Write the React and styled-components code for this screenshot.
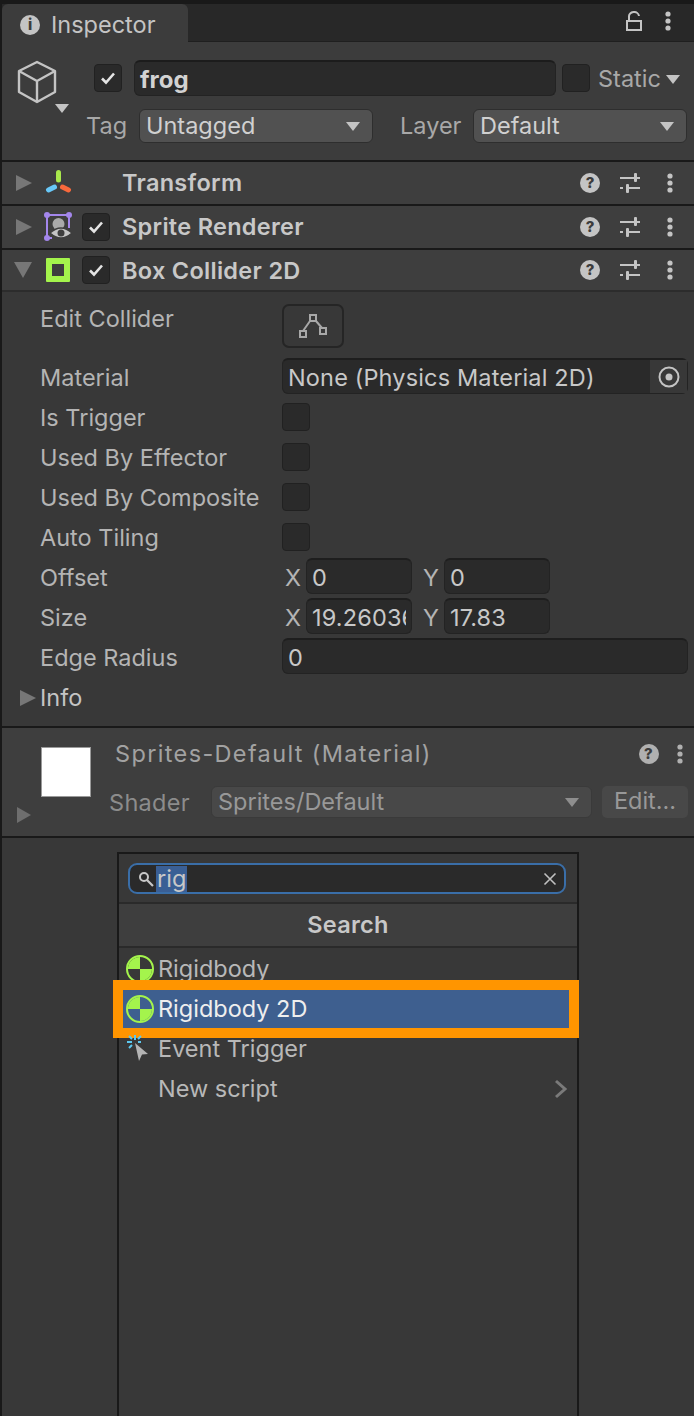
import React from 'react';
import styled, { createGlobalStyle } from 'styled-components';

const GlobalStyle = createGlobalStyle`
    html, body {
        margin: 0;
        padding: 0;
        background-color: #191919;
    }
    * {
        box-sizing: border-box;
    }
`

const Page = styled.div`
    position: relative;
    width: 694px;
    height: 1416px;
    overflow: hidden;
    padding: 4px 0 0 2px;
    background-color: #191919;
    font-family: Inter, "Noto Sans", sans-serif;
    font-size: 23.5px;
    line-height: 30px;
    color: #c4c4c4;
`

const TabBar = styled.div`
    display: flex;
    align-items: stretch;
    justify-content: space-between;
    height: 38px;
    background-color: #282828;
    border-bottom: 1px solid #1f1f1f;
`
const Tab = styled.div`
    display: flex;
    align-items: center;
    gap: 11px;
    width: 186px;
    height: 38px;
    padding: 4px 0 0 18px;
    background-color: #3c3c3c;
    border-radius: 6px 6px 0 0;
`
const TabTools = styled.div`
    display: flex;
    align-items: center;
    gap: 16px;
    padding-right: 16px;
    padding-bottom: 4px;
`
const Badge = styled.span`
    display: inline-flex;
    align-items: center;
    justify-content: center;
    flex: none;
    width: 20px;
    height: 20px;
    border-radius: 50%;
    background-color: ${(p) => (p.$dim ? '#b0b0b0' : '#c4c4c4')};
    color: #3c3c3c;
    font-size: 15px;
    font-weight: 800;
    line-height: 20px;
`

const Header = styled.div`
    display: flex;
    height: 118px;
    padding: 18px 7px 0 15px;
    background-color: #3c3c3c;
`
const CubeColumn = styled.div`
    position: relative;
    flex: none;
    width: 70px;
    height: 60px;
`
const CubeCaret = styled.span`
    position: absolute;
    left: 38px;
    top: 44px;
    width: 0;
    height: 0;
    border-left: 7px solid transparent;
    border-right: 7px solid transparent;
    border-top: 9px solid #c4c4c4;
`
const HeaderFields = styled.div`
    flex: 1;
    display: flex;
    flex-direction: column;
    gap: 13px;
`
const NameRow = styled.div`
    display: flex;
    align-items: center;
    gap: 6px;
    padding-left: 7px;
`
const TagRow = styled.div`
    display: flex;
    align-items: center;
    color: #a8a8a8;
`
const TagLabel = styled.span`
    flex: none;
    width: ${(p) => p.$width}px;
    margin-left: ${(p) => p.$left || 0}px;
`
const Check = styled.span`
    display: inline-flex;
    align-items: center;
    justify-content: center;
    flex: none;
    width: 28px;
    height: 28px;
    background-color: #2a2a2a;
    border: 1px solid #212121;
    border-radius: 4px;
`
const FieldCheck = styled(Check)`
    margin-top: -2px;
`
const NameInput = styled.div`
    flex: none;
    width: 422px;
    height: 36px;
    margin-left: 6px;
    padding-left: 5px;
    background-color: #2a2a2a;
    border: 1px solid #232323;
    border-top: 2px solid #1c1c1c;
    border-radius: 6px;
    font-size: 24px;
    font-weight: 700;
    line-height: 35px;
    color: #d2d2d2;
`
const StaticLabel = styled.span`
    display: flex;
    align-items: center;
    gap: 5px;
    margin-left: 2px;
    padding-top: 2px;
    color: #a8a8a8;
`
const Caret = styled.span`
    flex: none;
    width: 0;
    height: 0;
    border-left: 7px solid transparent;
    border-right: 7px solid transparent;
    border-top: 9px solid ${(p) => (p.$dim ? '#8e8e8e' : '#c4c4c4')};
`
const Select = styled.div`
    display: flex;
    align-items: center;
    justify-content: space-between;
    flex: none;
    width: ${(p) => p.$width}px;
    height: ${(p) => p.$height || 34}px;
    padding: 0 12px 0 6px;
    background-color: ${(p) => (p.$dim ? '#484848' : '#515151')};
    border: 1px solid ${(p) => (p.$dim ? '#3a3a3a' : '#2e2e2e')};
    border-radius: 6px;
    color: ${(p) => (p.$dim ? '#989898' : '#d0d0d0')};
`

const ComponentBar = styled.div`
    display: flex;
    align-items: center;
    height: ${(p) => (p.$open ? 40 : 42)}px;
    margin-top: 2px;
    padding-right: 14px;
    background-color: #3e3e3e;
`
const Fold = styled.span`
    flex: none;
    width: 0;
    height: 0;
    margin-left: 14px;
    border-top: 8px solid transparent;
    border-bottom: 8px solid transparent;
    border-left: 16px solid #777777;
`
const FoldOpen = styled.span`
    flex: none;
    width: 0;
    height: 0;
    margin-left: 12px;
    border-left: 9px solid transparent;
    border-right: 9px solid transparent;
    border-top: 16px solid #777777;
`
const BarIcon = styled.span`
    display: flex;
    align-items: center;
    justify-content: center;
    flex: none;
    width: 28px;
    height: 28px;
    margin-left: 12px;
`
const BarCheck = styled(Check)`
    margin-left: 10px;
`
const BarSlot = styled.span`
    flex: none;
    width: 38px;
`
const BarTitle = styled.span`
    flex: 1;
    margin-left: 12px;
    padding-top: ${(p) => (p.$open ? 1 : 0)}px;
    font-weight: 600;
    letter-spacing: 0.3px;
    color: #c8c8c8;
`
const BarTools = styled.div`
    display: flex;
    align-items: center;
    gap: 20px;
`

const Body = styled.div`
    height: 436px;
    padding: 12px 6px 0 38px;
    background-color: #383838;
    border-top: 2px solid #2c2c2c;
`
const FieldRow = styled.div`
    display: flex;
    align-items: center;
    height: ${(p) => p.$height || 40}px;
    margin-bottom: ${(p) => p.$gap || 0}px;
`
const Label = styled.span`
    flex: none;
    width: 242px;
    color: #b4b4b4;
`
const TopLabel = styled(Label)`
    align-self: flex-start;
`
const EditButton = styled.span`
    display: flex;
    align-items: center;
    justify-content: center;
    width: 62px;
    height: 44px;
    background-color: #383838;
    border: 2px solid #252525;
    border-radius: 7px;
`
const Input = styled.div`
    flex: ${(p) => (p.$grow ? 1 : 'none')};
    width: ${(p) => (p.$grow ? 'auto' : '106px')};
    height: 36px;
    margin-top: -4px;
    padding: 0 5px 0 5px;
    background-color: #2a2a2a;
    border: 1px solid #232323;
    border-top: 2px solid #1e1e1e;
    border-radius: 6px;
    line-height: 36px;
    letter-spacing: 0.15px;
    color: #c8c8c8;
`
const InputText = styled.span`
    display: block;
    overflow: hidden;
    white-space: nowrap;
`
const ObjectField = styled(Input)`
    display: flex;
    justify-content: space-between;
    padding-right: 0;
`
const PickerSlot = styled.span`
    display: flex;
    align-items: center;
    justify-content: center;
    width: 37px;
    background-color: #383838;
`
const Axis = styled.span`
    flex: none;
    width: ${(p) => p.$width}px;
    padding-left: ${(p) => p.$pad}px;
    color: #b4b4b4;
`
const InfoFold = styled(Fold)`
    margin-left: -20px;
    margin-right: 4px;
`

const MaterialPanel = styled.div`
    position: relative;
    display: flex;
    height: 108px;
    margin-top: 2px;
    padding: 11px 6px 0 39px;
    background-color: #3e3e3e;
`
const Swatch = styled.span`
    flex: none;
    width: 50px;
    height: 50px;
    margin-top: 8px;
    background-color: #ffffff;
    border: 1px solid #9a9a9a;
`
const MaterialFold = styled(Fold)`
    position: absolute;
    left: 15px;
    top: 79px;
    margin: 0;
    border-left-width: 14px;
    border-left-color: #6e6e6e;
`
const MaterialColumn = styled.div`
    flex: 1;
    display: flex;
    flex-direction: column;
    gap: 17px;
    margin-left: 18px;
`
const MaterialTitle = styled.div`
    display: flex;
    align-items: center;
    justify-content: space-between;
    height: 30px;
    margin-right: -2px;
    padding-left: 6px;
    letter-spacing: 1.35px;
    color: #a2a2a2;
`
const MaterialTools = styled.div`
    display: flex;
    align-items: center;
    gap: 11px;
`
const ShaderRow = styled.div`
    display: flex;
    align-items: center;
    color: #8c8c8c;
`
const ShaderLabel = styled.span`
    flex: none;
    width: 102px;
    padding-top: 2px;
    letter-spacing: 0.3px;
`
const EditLabel = styled.span`
    flex: none;
    width: 86px;
    height: 32px;
    margin-left: 10px;
    background-color: #484848;
    border-radius: 5px;
    line-height: 30px;
    text-align: center;
    color: #989898;
`
const Rest = styled.div`
    height: 578px;
    margin-top: 2px;
    background-color: #383838;
`

const Popup = styled.div`
    position: absolute;
    left: 117px;
    top: 852px;
    bottom: -4px;
    width: 462px;
    background-color: #383838;
    border: 2px solid #191919;
`
const SearchArea = styled.div`
    height: 50px;
    padding: 9px 11px 0 9px;
    border-bottom: 2px solid #2a2a2a;
`
const SearchBox = styled.div`
    display: flex;
    align-items: center;
    height: 31px;
    padding: 0 7px 0 8px;
    background-color: #2a2a2a;
    border: 2px solid #3a6ea8;
    border-radius: 9px;
    color: #c8c8c8;
`
const Selected = styled.span`
    flex: none;
    height: 26px;
    margin-left: 2px;
    padding: 0 1px;
    background-color: #3a5f95;
    line-height: 26px;
`
const ClearSlot = styled.span`
    display: flex;
    margin-left: auto;
`
const PopupTitle = styled.div`
    height: 44px;
    background-color: #3e3e3e;
    border-bottom: 2px solid #2a2a2a;
    font-weight: 600;
    line-height: 42px;
    letter-spacing: 0.3px;
    text-align: center;
    color: #c8c8c8;
`
const List = styled.div`
    display: flex;
    flex-direction: column;
    gap: 2px;
    padding: 2px 8px 0 4px;
`
const ListRow = styled.div`
    display: flex;
    align-items: center;
    gap: 4px;
    height: 38px;
    padding: 0 3px;
    color: ${(p) => (p.$active ? '#eeeeee' : '#b8b8b8')};
    background-color: ${(p) => (p.$active ? '#3e5f8f' : 'transparent')};
    outline: ${(p) => (p.$active ? '10px solid #ff9500' : 'none')};
`
const ListIcon = styled.span`
    display: flex;
    flex: none;
    width: 28px;
    height: 28px;
`
const RowArrow = styled.span`
    display: flex;
    margin-left: auto;
    margin-right: -2px;
`

const Tick = () => (
    <svg width="18" height="16" viewBox="0 0 18 16">
        <path d="M3 8.5 L7 12.5 L15 3.5" fill="none" stroke="#e4e4e4" strokeWidth="2.6" />
    </svg>
)

const Kebab = ({ color = '#c4c4c4' }) => (
    <svg width="20" height="20" viewBox="0 0 20 20">
        <circle cx="10" cy="3" r="2.6" fill={color} />
        <circle cx="10" cy="10" r="2.6" fill={color} />
        <circle cx="10" cy="17" r="2.6" fill={color} />
    </svg>
)

const Sliders = () => (
    <svg width="20" height="20" viewBox="0 0 20 20" fill="#c4c4c4">
        <rect x="0" y="4" width="20" height="2" />
        <rect x="14" y="0" width="3" height="9" rx="1" />
        <rect x="0" y="14" width="3" height="2" />
        <rect x="6" y="14" width="14" height="2" />
        <rect x="6" y="11" width="3" height="9" rx="1" />
    </svg>
)

const Lock = () => (
    <svg width="16" height="20" viewBox="0 0 16 20" fill="none" stroke="#c4c4c4" strokeWidth="2">
        <rect x="1" y="10" width="14" height="9" />
        <path d="M3 10 V6 a5 4.5 0 0 1 10 -1" />
    </svg>
)

const Cube = () => (
    <svg width="40" height="44" viewBox="0 0 40 44" fill="none" stroke="#c4c4c4" strokeWidth="2.4" strokeLinejoin="round">
        <path d="M20 2 L38 11 V32 L20 42 L2 32 V11 Z" />
        <path d="M2 11 L20 21 L38 11 M20 21 V42" />
    </svg>
)

const TransformIcon = () => (
    <svg width="28" height="28" viewBox="0 0 28 28" strokeLinecap="round" fill="none">
        <path d="M14.5 3.5 V11" stroke="#a9e84c" strokeWidth="5" />
        <path d="M10.5 18 L4.5 21" stroke="#68c8f8" strokeWidth="5" />
        <path d="M18.5 18 L24.5 21" stroke="#f8693c" strokeWidth="5" />
    </svg>
)

const SpriteIcon = () => (
    <svg width="28" height="30" viewBox="0 0 28 30">
        <path d="M3 3 H25 V16 M3 3 V26 H8" fill="none" stroke="#a487ec" strokeWidth="2" />
        <circle cx="3" cy="3" r="3" fill="#a487ec" />
        <circle cx="25" cy="3" r="3" fill="#a487ec" />
        <circle cx="3" cy="26" r="3" fill="#a487ec" />
        <circle cx="14.5" cy="12" r="6" fill="#aaaaaa" />
        <path d="M6 21 Q17 11 28 21 Q17 31 6 21 Z" fill="#c4c4c4" stroke="#3e3e3e" strokeWidth="1.5" />
        <circle cx="17" cy="21" r="3.5" fill="#3e3e3e" />
    </svg>
)

const BoxIcon = () => (
    <svg width="24" height="24" viewBox="0 0 24 24">
        <path d="M0 1 a1 1 0 0 1 1 -1 H23 a1 1 0 0 1 1 1 V23 a1 1 0 0 1 -1 1 H1 a1 1 0 0 1 -1 -1 Z M6 6 V18 H18 V6 Z" fill="#a4f44c" fillRule="evenodd" />
    </svg>
)

const EditColliderIcon = () => (
    <svg width="28" height="24" viewBox="0 0 28 24" fill="none" stroke="#a8a8a8" strokeWidth="2">
        <path d="M4 17 L11 7 M17 7 L23 14" />
        <rect x="11" y="1" width="6" height="6" />
        <rect x="1" y="17" width="6" height="6" />
        <rect x="21" y="14" width="6" height="6" />
    </svg>
)

const Picker = () => (
    <svg width="22" height="22" viewBox="0 0 22 22">
        <circle cx="11" cy="11" r="9.5" fill="none" stroke="#c4c4c4" strokeWidth="2" />
        <circle cx="11" cy="11" r="3.5" fill="#c4c4c4" />
    </svg>
)

const Magnifier = () => (
    <svg width="16" height="16" viewBox="0 0 16 16" fill="none" stroke="#c8c8c8">
        <circle cx="6" cy="6" r="4" strokeWidth="2" />
        <path d="M9 9 L15 15" strokeWidth="2.2" />
    </svg>
)

const Clear = () => (
    <svg width="14" height="14" viewBox="0 0 14 14" fill="none" stroke="#c0c0c0" strokeWidth="1.6">
        <path d="M1.5 1.5 L12.5 12.5 M12.5 1.5 L1.5 12.5" />
    </svg>
)

const RigidbodyIcon = ({ ground }) => (
    <svg width="28" height="28" viewBox="0 0 28 28">
        <circle cx="14" cy="14" r="13" fill={ground} stroke="#a4f44c" strokeWidth="2" />
        <path d="M14 14 V2 A12 12 0 0 0 2 14 Z M14 14 V26 A12 12 0 0 0 26 14 Z" fill="#a4f44c" />
    </svg>
)

const TriggerIcon = () => (
    <svg width="28" height="28" viewBox="0 0 28 28">
        <path d="M9 8 L22 19 L16 19.5 L13 26 Z" fill="#b4b4b4" />
        <g stroke="#5cc8f0" strokeWidth="2">
            <path d="M9 0 V5 M1 7 H6 M3 1 L6 4 M15 1 L12 4 M3 13 L6 10 M12 7 H15" />
        </g>
    </svg>
)

const Chevron = () => (
    <svg width="14" height="20" viewBox="0 0 14 20" fill="none" stroke="#7a7a7a" strokeWidth="3">
        <path d="M2 2 L11 10 L2 18" />
    </svg>
)

const collapsed = [
    { title: 'Transform', icon: <TransformIcon /> },
    { title: 'Sprite Renderer', icon: <SpriteIcon />, check: true },
    { title: 'Box Collider 2D', icon: <BoxIcon />, check: true, open: true },
]

const ComponentRow = ({ title, icon, check, open }) => (
    <ComponentBar $open={open}>
        {open ? <FoldOpen /> : <Fold />}
        <BarIcon>{icon}</BarIcon>
        {check ? <BarCheck><Tick /></BarCheck> : <BarSlot />}
        <BarTitle $open={open}>{title}</BarTitle>
        <BarTools>
            <Badge>?</Badge>
            <Sliders />
            <Kebab />
        </BarTools>
    </ComponentBar>
)

export default function App() {
    return (
        <Page>
            <GlobalStyle />
            <TabBar>
                <Tab>
                    <Badge>i</Badge>
                    <span>Inspector</span>
                </Tab>
                <TabTools>
                    <Lock />
                    <Kebab />
                </TabTools>
            </TabBar>
            <Header>
                <CubeColumn>
                    <Cube />
                    <CubeCaret />
                </CubeColumn>
                <HeaderFields>
                    <NameRow>
                        <Check><Tick /></Check>
                        <NameInput>frog</NameInput>
                        <Check />
                        <StaticLabel>Static<Caret /></StaticLabel>
                    </NameRow>
                    <TagRow>
                        <TagLabel $width={53} $left={-1}>Tag</TagLabel>
                        <Select $width={234}>Untagged<Caret /></Select>
                        <TagLabel $width={73} $left={27}>Layer</TagLabel>
                        <Select $width={214}>Default<Caret /></Select>
                    </TagRow>
                </HeaderFields>
            </Header>
            {collapsed.map((item) => <ComponentRow key={item.title} {...item} />)}
            <Body>
                <FieldRow $height={44} $gap={10}>
                    <TopLabel>Edit Collider</TopLabel>
                    <EditButton><EditColliderIcon /></EditButton>
                </FieldRow>
                <FieldRow>
                    <Label>Material</Label>
                    <ObjectField $grow>
                        <InputText>None (Physics Material 2D)</InputText>
                        <PickerSlot><Picker /></PickerSlot>
                    </ObjectField>
                </FieldRow>
                <FieldRow><Label>Is Trigger</Label><FieldCheck /></FieldRow>
                <FieldRow><Label>Used By Effector</Label><FieldCheck /></FieldRow>
                <FieldRow><Label>Used By Composite</Label><FieldCheck /></FieldRow>
                <FieldRow><Label>Auto Tiling</Label><FieldCheck /></FieldRow>
                <FieldRow>
                    <Label>Offset</Label>
                    <Axis $width={24} $pad={3}>X</Axis>
                    <Input><InputText>0</InputText></Input>
                    <Axis $width={32} $pad={11}>Y</Axis>
                    <Input><InputText>0</InputText></Input>
                </FieldRow>
                <FieldRow>
                    <Label>Size</Label>
                    <Axis $width={24} $pad={3}>X</Axis>
                    <Input><InputText>19.26036</InputText></Input>
                    <Axis $width={32} $pad={11}>Y</Axis>
                    <Input><InputText>17.83</InputText></Input>
                </FieldRow>
                <FieldRow>
                    <Label>Edge Radius</Label>
                    <Input $grow><InputText>0</InputText></Input>
                </FieldRow>
                <FieldRow>
                    <InfoFold />
                    <span>Info</span>
                </FieldRow>
            </Body>
            <MaterialPanel>
                <Swatch />
                <MaterialFold />
                <MaterialColumn>
                    <MaterialTitle>
                        Sprites-Default (Material)
                        <MaterialTools>
                            <Badge $dim>?</Badge>
                            <Kebab color="#b0b0b0" />
                        </MaterialTools>
                    </MaterialTitle>
                    <ShaderRow>
                        <ShaderLabel>Shader</ShaderLabel>
                        <Select $dim $width={381} $height={32}>Sprites/Default<Caret $dim /></Select>
                        <EditLabel>Edit...</EditLabel>
                    </ShaderRow>
                </MaterialColumn>
            </MaterialPanel>
            <Rest />
            <Popup>
                <SearchArea>
                    <SearchBox>
                        <Magnifier />
                        <Selected>rig</Selected>
                        <ClearSlot><Clear /></ClearSlot>
                    </SearchBox>
                </SearchArea>
                <PopupTitle>Search</PopupTitle>
                <List>
                    <ListRow>
                        <ListIcon><RigidbodyIcon ground="#383838" /></ListIcon>
                        Rigidbody
                    </ListRow>
                    <ListRow $active>
                        <ListIcon><RigidbodyIcon ground="#3e5f8f" /></ListIcon>
                        Rigidbody 2D
                    </ListRow>
                    <ListRow>
                        <ListIcon><TriggerIcon /></ListIcon>
                        Event Trigger
                    </ListRow>
                    <ListRow>
                        <ListIcon />
                        New script
                        <RowArrow><Chevron /></RowArrow>
                    </ListRow>
                </List>
            </Popup>
        </Page>
    )
}
